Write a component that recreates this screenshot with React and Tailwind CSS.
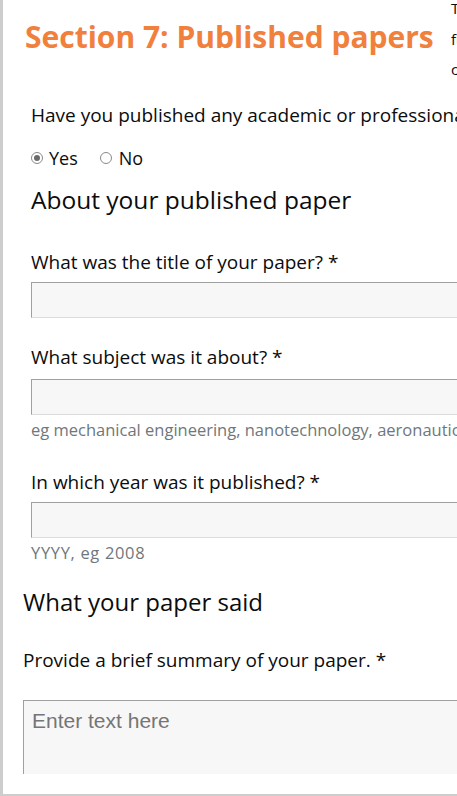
export default function App() {
  const body = { fontFamily: '"Open Sans", "Noto Sans", sans-serif' };
  const label = 'text-[19px] leading-[24px] text-[#0b0c0c]';
  const input = 'h-[36px] w-[600px] border border-r-0 border-[#a0a0a0] border-b-[#dcdcdc] bg-[#f7f7f7]';
  const hint = 'text-[16.5px] leading-[20px] text-[#6f777b]';

  return (
    <div className="h-[796px] w-[457px] overflow-hidden border-b-2 border-l-[3px] border-[#cdcdcd] bg-white" style={body}>
      <div className="flex h-[86px] w-[700px] items-start">
        <h1 className="mt-[19px] ml-[22px] w-[426px] shrink-0 text-[30px] font-bold leading-[36px] text-[#f0803c]">
          Section 7: Published papers
        </h1>
        <p className="-mt-[7px] w-[240px] text-[15px] leading-[30.5px] text-[#0b0c0c]">
          These questions are about
          <br />
          further research you have
          <br />
          carried out
        </p>
      </div>

      <div className="w-[900px] pl-[28px]">
        <p className={`mt-[17px] ${label}`}>Have you published any academic or professional papers? *</p>
        <div className="mt-[19px] flex items-center text-[18px] leading-[24px] text-[#0b0c0c]">
          <span className="mr-[6px] flex h-[12px] w-[12px] items-center justify-center rounded-full border border-[#8a8a8a] bg-white">
            <span className="h-[6px] w-[6px] rounded-full bg-[#6b6b6b]" />
          </span>
          <span>Yes</span>
          <span className="mr-[7px] ml-[22px] h-[12px] w-[12px] rounded-full border border-[#8a8a8a] bg-white" />
          <span>No</span>
        </div>
        <h2 className="mt-[14px] text-[24.5px] leading-[32px] text-[#0b0c0c]">About your published paper</h2>

        <p className={`mt-[34px] ${label}`}>What was the title of your paper? *</p>
        <div className={`mt-[8px] ${input}`} />

        <p className={`mt-[27px] ${label}`}>What subject was it about? *</p>
        <div className={`mt-[10px] ${input}`} />
        <p className={`mt-[5px] ${hint}`}>eg mechanical engineering, nanotechnology, aeronautics</p>

        <p className={`mt-[30px] ${label}`}>In which year was it published? *</p>
        <div className={`mt-[8px] ${input}`} />
        <p className={`mt-[5px] ${hint} tracking-[0.04em]`}>YYYY, eg 2008</p>
      </div>

      <div className="w-[900px] pl-[20px]">
        <h2 className="mt-[23px] text-[24px] leading-[32px] text-[#0b0c0c]">What your paper said</h2>
        <p className={`mt-[30px] ${label}`}>Provide a brief summary of your paper. *</p>
        <div className="mt-[28px] h-[74px] w-[600px] border border-r-0 border-b-0 border-[#a0a0a0] bg-[#f7f7f7] px-[8px] pt-[7px]">
          <span className="text-[21px] leading-[26px] text-[#757575]" style={{ fontFamily: '"Liberation Sans", Arial, sans-serif' }}>
            Enter text here
          </span>
        </div>
      </div>
    </div>
  );
}
